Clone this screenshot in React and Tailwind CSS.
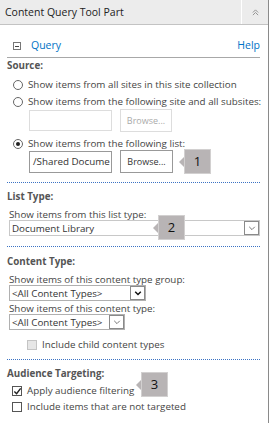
import React from "react";

const font = { fontFamily: '"Open Sans", "Noto Sans", sans-serif' };

function Radio({ checked }) {
  return (
    <span className="relative inline-block w-[10px] h-[10px] rounded-full border border-[#666] bg-white shrink-0">
      {checked && <span className="absolute left-[2px] top-[2px] w-[4px] h-[4px] rounded-full bg-[#222]" />}
    </span>
  );
}

function Check({ checked, disabled }) {
  return (
    <span className={`relative inline-block w-[10px] h-[10px] border shrink-0 ${disabled ? "border-[#c4c4c4] bg-[#e6e6e6]" : "border-[#555] bg-white"}`}>
      {checked && (
        <svg viewBox="0 0 10 10" className="absolute left-0 top-0 w-[9px] h-[9px]">
          <path d="M1.5 5 L4 7.5 L8.5 1.5" fill="none" stroke="#222" strokeWidth="1.6" />
        </svg>
      )}
    </span>
  );
}

function Callout({ n, className }) {
  return (
    <div className={`absolute flex items-center ${className}`}>
      <div className="w-0 h-0 border-y-[5px] border-y-transparent border-r-[5px] border-r-[#b8b4b5]" />
      <div className="w-[27px] h-[25px] bg-[#b8b4b5] border border-[#d2d0d0] flex items-center justify-center text-[13px] text-[#111]">
        {n}
      </div>
    </div>
  );
}

function Arrow({ bold }) {
  return (
    <span className="w-[15px] h-[14px] border border-[#8a8a8a] bg-white flex items-center justify-center shrink-0">
      <svg viewBox="0 0 10 10" className="w-[8px] h-[8px]">
        <path d="M1.5 3.5 L5 7 L8.5 3.5" fill="none" stroke={bold ? "#111" : "#555"} strokeWidth={bold ? "1.8" : "1"} />
      </svg>
    </span>
  );
}

function Dotted({ className }) {
  return <div className={`ml-[7px] w-[253px] border-t border-dotted border-[#3b73c4] ${className}`} />;
}

export default function App() {
  return (
    <div className="w-[272px] h-[423px] bg-white text-[#444] text-[9.8px] leading-[13px] overflow-hidden" style={font}>
      <div className="w-[269px] h-[423px] border-r border-[#8a8a8a]">
        <div className="h-[25px] bg-[#ececec] border-b border-[#c3c3c3] flex">
          <div className="flex-1 pl-[5px] pt-[6px] text-[10.5px] text-[#222]">Content Query Tool Part</div>
          <div className="w-[1px] bg-white" />
          <div className="w-[26px] flex items-center justify-center">
            <svg viewBox="0 0 8 8" className="w-[7px] h-[7px]">
              <path d="M1 4 L4 1 L7 4 M1 7 L4 4 L7 7" fill="none" stroke="#888" strokeWidth="1" />
            </svg>
          </div>
        </div>

        <div className="ml-[7px] w-[253px] mt-[14px] h-[19px] border-b border-[#a8a8a8] flex items-start">
          <span className="ml-[6px] mt-[3px] w-[8px] h-[8px] border border-[#777] flex items-center justify-center">
            <span className="w-[4px] h-[1px] bg-[#444]" />
          </span>
          <span className="ml-[10px] text-[#0072c6] text-[10.5px]">Query</span>
          <span className="ml-auto text-[#0072c6] text-[10.5px]">Help</span>
        </div>

        <div className="pl-[7px] mt-[1px] font-bold text-[#555]">Source:</div>

        <div className="pl-[13px] mt-[6px] flex items-center gap-[5px]">
          <Radio />
          <span>Show items from all sites in this site collection</span>
        </div>
        <div className="pl-[13px] mt-[4px] flex items-center gap-[5px]">
          <Radio />
          <span>Show items from the following site and all subsites:</span>
        </div>
        <div className="pl-[29px] mt-[1px] flex items-center gap-[8px]">
          <div className="w-[83px] h-[21px] border border-[#ddd] bg-white" />
          <div className="w-[52px] h-[23px] border border-[#ddd] flex items-center justify-center text-[#aaa] text-[9px]">Browse...</div>
        </div>
        <div className="pl-[13px] mt-[5px] flex items-center gap-[5px]">
          <Radio checked />
          <span>Show items from the following list:</span>
        </div>
        <div className="relative pl-[29px] flex items-center gap-[8px]">
          <div className="w-[83px] h-[22px] border border-[#999] bg-white flex items-center pl-[3px] whitespace-nowrap overflow-hidden text-[#333]">/Shared Docume</div>
          <div className="w-[53px] h-[23px] border border-[#999] flex items-center justify-center text-[#333] text-[9px]">Browse...</div>
          <Callout n="1" className="left-[179px] top-[-1px]" />
        </div>

        <Dotted className="mt-[9px]" />

        <div className="pl-[7px] mt-[7px] font-bold text-[#555]">List Type:</div>
        <div className="pl-[9px] mt-[5px]">Show items from this list type:</div>
        <div className="relative ml-[9px] w-[251px] h-[16px] border border-[#c8c8c8] flex items-center mt-[-1px]">
          <span className="pl-[2px] text-[#333]">Document Library</span>
          <span className="ml-auto"><Arrow /></span>
          <Callout n="2" className="left-[143px] top-[-6px]" />
        </div>

        <Dotted className="mt-[10px]" />

        <div className="pl-[7px] mt-[8px] font-bold text-[#555]">Content Type:</div>
        <div className="pl-[9px] mt-[6px] leading-[11px]">Show items of this content type group:</div>
        <div className="ml-[9px] w-[137px] h-[16px] border border-[#b0b0b0] flex items-center">
          <span className="pl-[2px] text-[#333]">&lt;All Content Types&gt;</span>
          <span className="ml-auto"><Arrow bold /></span>
        </div>
        <div className="pl-[9px] mt-[2px] leading-[11px]">Show items of this content type:</div>
        <div className="ml-[9px] w-[116px] h-[16px] border border-[#b0b0b0] flex items-center">
          <span className="pl-[2px] text-[#333] whitespace-nowrap">&lt;All Content Types&gt;</span>
          <span className="ml-auto"><Arrow /></span>
        </div>
        <div className="pl-[27px] mt-[8px] flex items-center gap-[5px]">
          <Check disabled />
          <span>Include child content types</span>
        </div>

        <Dotted className="mt-[8px]" />

        <div className="pl-[7px] mt-[7px] font-bold text-[#555]">Audience Targeting:</div>
        <div className="relative pl-[12px] mt-[4px] flex items-center gap-[5px]">
          <Check checked />
          <span>Apply audience filtering</span>
          <Callout n="3" className="left-[136px] top-[-12px]" />
        </div>
        <div className="pl-[12px] mt-[3px] flex items-center gap-[5px]">
          <Check />
          <span>Include items that are not targeted</span>
        </div>
      </div>
    </div>
  );
}
